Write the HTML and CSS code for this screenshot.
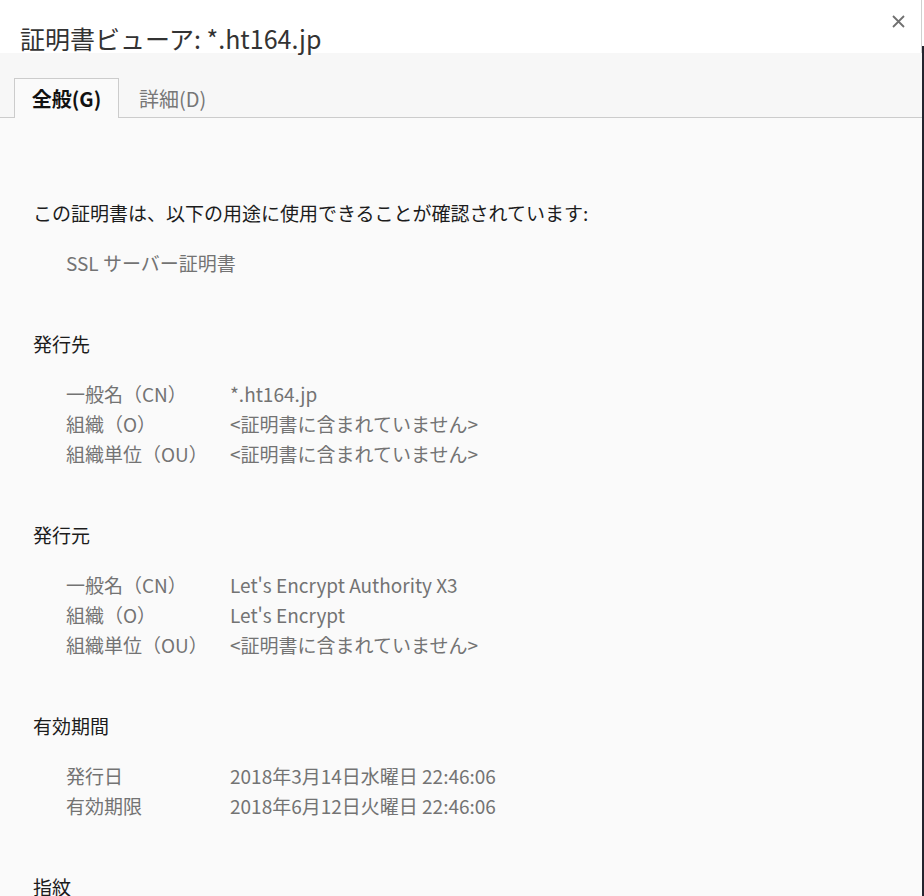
FILE: index.html
```html
<!DOCTYPE html>
<html lang="ja">
<head>
    <meta charset="UTF-8">
    <meta name="viewport" content="width=device-width, initial-scale=1.0">
    <title>証明書ビューア</title>
    <link rel="stylesheet" href="styles.css">
</head>
<body>
    <div class="window">
        <div class="dialog">
            <div class="dialog-header">
                <h1 class="dialog-title">証明書ビューア: *.ht164.jp</h1>
                <button class="close-btn" aria-label="閉じる">
                    <svg width="13" height="13" viewBox="0 0 13 13">
                        <path d="M1 1 L12 12 M12 1 L1 12" stroke="#707070" stroke-width="1.8" fill="none"/>
                    </svg>
                </button>
            </div>

            <div class="tabs">
                <div class="tab active">全般(G)</div>
                <div class="tab">詳細(D)</div>
            </div>

            <div class="content">
                <section class="section first">
                    <h2 class="section-title">この証明書は、以下の用途に使用できることが確認されています:</h2>
                    <div class="rows">
                        <div class="row"><span class="label">SSL サーバー証明書</span></div>
                    </div>
                </section>

                <section class="section">
                    <h2 class="section-title">発行先</h2>
                    <div class="rows">
                        <div class="row"><span class="label">一般名（CN）</span><span class="value">*.ht164.jp</span></div>
                        <div class="row"><span class="label">組織（O）</span><span class="value">&lt;証明書に含まれていません&gt;</span></div>
                        <div class="row"><span class="label">組織単位（OU）</span><span class="value">&lt;証明書に含まれていません&gt;</span></div>
                    </div>
                </section>

                <section class="section">
                    <h2 class="section-title">発行元</h2>
                    <div class="rows">
                        <div class="row"><span class="label">一般名（CN）</span><span class="value">Let's Encrypt Authority X3</span></div>
                        <div class="row"><span class="label">組織（O）</span><span class="value">Let's Encrypt</span></div>
                        <div class="row"><span class="label">組織単位（OU）</span><span class="value">&lt;証明書に含まれていません&gt;</span></div>
                    </div>
                </section>

                <section class="section">
                    <h2 class="section-title">有効期間</h2>
                    <div class="rows">
                        <div class="row"><span class="label">発行日</span><span class="value">2018年3月14日水曜日 22:46:06</span></div>
                        <div class="row"><span class="label">有効期限</span><span class="value">2018年6月12日火曜日 22:46:06</span></div>
                    </div>
                </section>

                <section class="section">
                    <h2 class="section-title">指紋</h2>
                </section>
            </div>
        </div>
        <div class="edge"></div>
    </div>
</body>
</html>
```

FILE: styles.css
```css
body {
    margin: 0;
    font-family: "Noto Sans CJK JP", "Noto Sans", sans-serif;
    background-color: #fafafa;
    overflow: hidden;
}

.window {
    display: flex;
    height: 896px;
}

.dialog {
    width: 922px;
    background-color: #fafafa;
}

.edge {
    width: 2px;
    background: linear-gradient(#ffffff 0, #ffffff 46px, #24242e 46px);
}

.dialog-header {
    position: relative;
    height: 53px;
    box-sizing: border-box;
    padding: 23px 0 0 20px;
    background-color: #ffffff;
    border-right: 1px solid #d0d0d0;
}

.dialog-title {
    margin: 0;
    font-size: 25px;
    font-weight: normal;
    line-height: 30px;
    color: #333333;
}

.close-btn {
    position: absolute;
    top: 15px;
    right: 16px;
    padding: 0;
    border: none;
    background: none;
    line-height: 0;
    cursor: pointer;
}

.tabs {
    display: flex;
    padding: 25px 0 0 14px;
    background-color: #f7f7f7;
    border-bottom: 1px solid #cccccc;
}

.tab {
    height: 39px;
    line-height: 39px;
    padding: 0 19px;
    font-size: 20px;
    color: #777777;
    margin-bottom: -1px;
    border: 1px solid transparent;
    border-bottom: none;
}

.tab.active {
    width: 105px;
    box-sizing: border-box;
    padding: 0;
    text-align: center;
    font-weight: bold;
    color: #111111;
    background-color: #fafafa;
    border-color: #cccccc;
    height: 40px;
}

.content {
    padding: 80px 0 0 33px;
}

.section {
    margin-top: 51px;
}

.section.first {
    margin-top: 0;
}

.section-title {
    margin: 0;
    font-size: 19px;
    font-weight: normal;
    line-height: 30px;
    color: #1c1c1c;
}

.rows {
    margin-top: 20px;
    padding-left: 33px;
}

.row {
    display: flex;
    font-size: 19px;
    line-height: 30px;
    color: #737373;
}

.label {
    width: 164px;
    flex-shrink: 0;
    white-space: nowrap;
}
```
